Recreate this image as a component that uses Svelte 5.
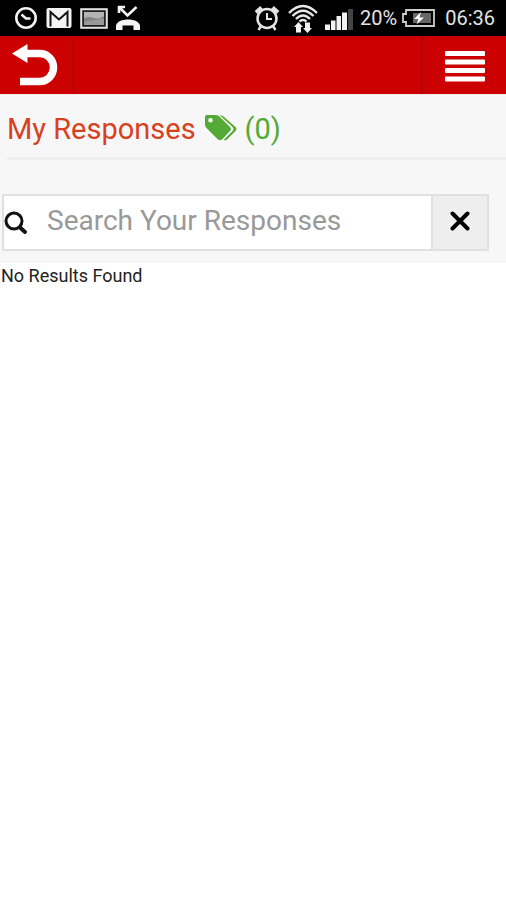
<script lang="ts">
	let query = $state('');
	let results: string[] = $state([]);
</script>

<div class="status-bar">
	<div class="status-group notifications">
		<svg width="24" height="28" viewBox="0 0 24 28" fill="none" stroke="#f4f4f4" aria-hidden="true">
			<circle cx="12" cy="14" r="9.7" stroke-width="2.6" />
			<path d="M7.500 10.500l4.500 4h4.500" stroke-width="2.400" />
		</svg>
		<svg width="26" height="28" viewBox="0 0 26 28" aria-hidden="true">
			<rect x="0.500" y="4" width="25" height="20" rx="2" fill="#f4f4f4" />
			<path d="M4.500 22.500V8L13 15.500 21.500 8v14.500" fill="none" stroke="#111" stroke-width="2" />
		</svg>
		<svg width="28" height="28" viewBox="0 0 28 28" aria-hidden="true">
			<rect x="1.200" y="5.200" width="25.600" height="18.600" fill="#222" stroke="#e4e4e4" stroke-width="2" />
			<rect x="4" y="8" width="20" height="13" fill="#b4b4b4" />
			<path d="M4 14q5-2 10 0t10-2v3L4 18z" fill="#858585" />
			<path d="M4 18l20-3v6H4z" fill="#999" />
		</svg>
		<svg width="26" height="28" viewBox="0 0 26 28" aria-hidden="true">
			<path d="M3 9V3h6M3 3l8.500 8.500L20.500 3" fill="none" stroke="#f4f4f4" stroke-width="2.600" />
			<path d="M0 26v-4.500c1-4 6-6 12-6s11 2 12 6V26h-6.500v-4.500h-11V26z" fill="#f4f4f4" />
		</svg>
	</div>
	<div class="status-group">
		<svg width="26" height="28" viewBox="0 0 26 28" fill="none" stroke="#e4e4e4" aria-hidden="true">
			<circle cx="12" cy="14.500" r="9.500" stroke-width="2.500" />
			<path d="M12 9v6h5" stroke-width="2" />
			<path d="M1 8.500l5.500-5M23 8.500l-5.500-5" stroke-width="4" />
			<path d="M6 22l-2.500 4M18 22l2.500 4" stroke-width="2.400" />
		</svg>
		<svg width="30" height="32" viewBox="0 0 30 32" fill="none" stroke="#e8e8e8" stroke-width="2.400" aria-hidden="true">
			<path d="M1 11q14-14 28 0M4.500 14q10.500-10.500 21 0M8 17q7-7 14 0M11.500 19.500q3.500-3 7 0" />
			<path d="M10.500 20l4.500 5h-2v5.500H8V25H6zM19.500 31l-4.500-5h2v-5.500h5V26h2z" fill="#f4f4f4" stroke="none" />
		</svg>
		<svg width="28" height="28" viewBox="0 0 28 28" fill="#f2f2f2" aria-hidden="true">
			<path d="M0 20.500h5V26H0zM6 16.500h4.500V26H6zM11.500 12h4.500v14h-4.500zM17 8.500h5V26h-5z" />
			<path d="M23 5h5v21h-5z" fill="#444" />
		</svg>
		<span class="percent">20%</span>
		<svg width="34" height="28" viewBox="0 0 34 28" aria-hidden="true">
			<path d="M5 6h28v16H5v-4H2v-8h3z" fill="none" stroke="#ccc" stroke-width="1.800" />
			<rect x="12" y="9" width="18" height="10" fill="#666" />
			<path d="M20 8l-7 7h4.500l-2 5.500 7.500-7h-4.500z" fill="#fff" />
		</svg>
		<span class="time">06:36</span>
	</div>
</div>

<nav class="nav">
	<button class="nav-btn back" type="button" aria-label="Back">
		<svg width="46" height="42" viewBox="0 0 46 42" aria-hidden="true">
			<path d="M12 9.500h16a13.500 14 0 0 1 0 28H8" fill="none" stroke="#fff" stroke-width="7.500" />
			<path d="M0 9.500L15.500 0v19z" fill="#fff" />
		</svg>
	</button>
	<button class="nav-btn menu" type="button" aria-label="Menu">
		<svg width="42" height="32" viewBox="0 0 42 32" fill="#fff" aria-hidden="true">
			<rect x="1" y="1" width="40" height="5" rx="1" />
			<rect x="1" y="9.500" width="40" height="5" rx="1" />
			<rect x="1" y="18" width="40" height="5" rx="1" />
			<rect x="1" y="26.500" width="40" height="5" rx="1" />
		</svg>
	</button>
</nav>

<header class="panel">
	<h1 class="title">
		<span>My Responses</span>
		<svg width="33" height="28" viewBox="0 0 33 28" fill="#55a936" aria-hidden="true">
			<path fill-rule="evenodd" d="M3 0h9q2 0 3.500 1.500L26 12q2 2 0 4l-8 8.500q-2 1.500-4 0L2.500 13Q1 11.500 1 9.500V2q0-2 2-2zM6.500 3a2.300 2.300 0 1 0 0 4.600 2.300 2.300 0 0 0 0-4.600z" />
			<path d="M15.500 0q2.500 0 4 1.500L31.500 12q2 2 0 4l-8.500 8.500q-1.500 1.300-3.200.2L28.500 16q2-2 0-4z" />
		</svg>
		<span class="count">({results.length})</span>
	</h1>

	<form class="search" onsubmit={(e) => e.preventDefault()}>
		<label class="search-icon" for="query" aria-label="Search">
			<svg width="24" height="24" viewBox="0 0 24 24" fill="none" stroke="#111" aria-hidden="true">
				<circle cx="10" cy="10" r="8" stroke-width="3" />
				<path d="M16 16.500l5 4.500" stroke-width="4" stroke-linecap="round" />
			</svg>
		</label>
		<input id="query" type="text" placeholder="Search Your Responses" bind:value={query} />
		<button class="clear" type="button" aria-label="Clear" onclick={() => (query = '')}>
			<svg width="20" height="20" viewBox="0 0 20 20" aria-hidden="true">
				<path d="M2.500 2.500l15 15M17.500 2.500l-15 15" stroke="#000" stroke-width="4" stroke-linecap="round" />
			</svg>
		</button>
	</form>
</header>

<main class="results">
	{#each results as result (result)}
		<p>{result}</p>
	{:else}
		<p>No Results Found</p>
	{/each}
</main>

<style>
	:global(body) {
		margin: 0;
		background: #fff;
		font-family: Roboto, 'Liberation Sans', sans-serif;
	}

	svg {
		display: block;
		flex: none;
	}

	button {
		padding: 0;
		border: 0;
		cursor: pointer;
	}

	.status-bar {
		display: flex;
		align-items: center;
		justify-content: space-between;
		height: 36px;
		padding: 0 11px 0 14px;
		background: #000;
		color: #e4e4e4;
		font-size: 20px;
		line-height: 36px;
	}

	.status-group {
		display: flex;
		align-items: center;
		gap: 7px;
	}

	.notifications {
		gap: 8px;
	}

	.percent {
		margin-right: -3px;
	}

	.time {
		margin-left: 3px;
	}

	.nav {
		display: flex;
		justify-content: space-between;
		height: 58px;
		background: #c00;
	}

	.nav-btn {
		display: flex;
		align-items: center;
		background: none;
	}

	.back {
		width: 74px;
		padding-left: 12px;
		border-right: 2px solid #b50505;
	}

	.menu {
		width: 85px;
		padding: 2px 0 0 21px;
		border-left: 2px solid #a80808;
	}

	.panel {
		padding-bottom: 12px;
		border-top: 1px solid #fde8e8;
		background: #f7f7f7;
	}

	.title {
		display: flex;
		align-items: center;
		gap: 8px;
		margin: 0 0 0 7px;
		padding: 14px 0 8px;
		border-bottom: 3px solid #efefef;
		color: #d9411e;
		font-size: 29px;
		font-weight: 400;
		line-height: 40px;
	}

	.count {
		color: #55a936;
	}

	.search {
		display: flex;
		height: 53px;
		margin: 34px 17px 0 2px;
		border: 2px solid #e0e0e0;
		background: #fff;
	}

	.search-icon {
		display: flex;
		align-items: center;
		width: 43px;
	}

	input {
		flex: 1;
		min-width: 0;
		padding: 0 0 4px;
		border: 0;
		outline: 0;
		background: none;
		color: #333;
		font-family: inherit;
		font-size: 28px;
	}

	input::placeholder {
		color: #999;
		opacity: 1;
	}

	.clear {
		display: flex;
		align-items: center;
		justify-content: center;
		width: 56px;
		padding-bottom: 4px;
		border-left: 2px solid #e0e0e0;
		background: #eee;
	}

	.results p {
		margin: 0;
		padding: 0 1px;
		color: #222;
		font-size: 18px;
		line-height: 26px;
	}
</style>
